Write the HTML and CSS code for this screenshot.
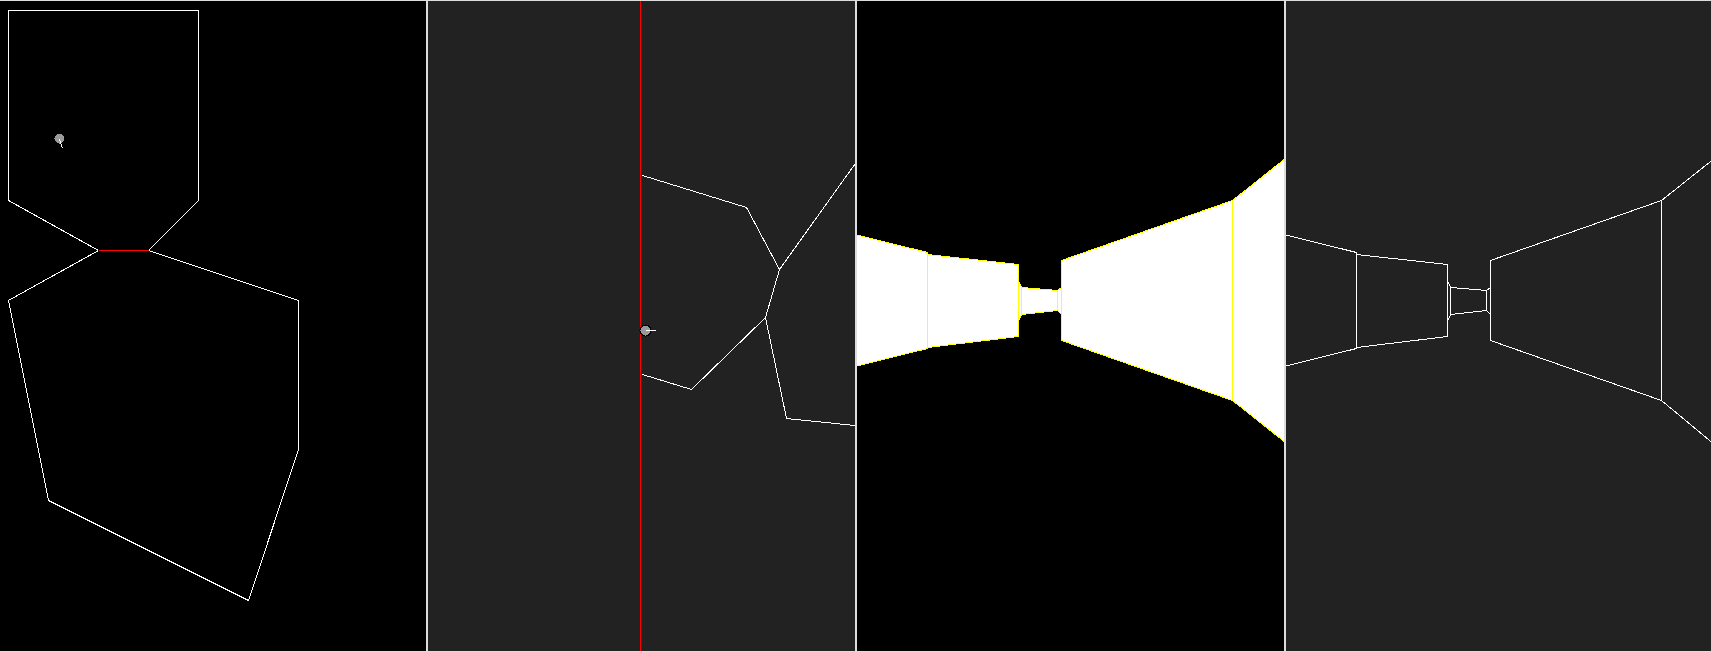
FILE: index.html
```html
<!DOCTYPE html>
<html lang="en">
<head>
<meta charset="utf-8">
<title>Portal renderer</title>
<link rel="stylesheet" href="styles.css">
</head>
<body>
<main class="stage">
  <svg class="view view-dark" width="426" height="650" viewBox="0 0 426 650">
    <polyline class="wall" points="98.5,249.5 8.5,199.5 8.5,9.5 198.5,9.5 198.5,199.5 148.5,249.5"/>
    <polyline class="wall" points="98.5,249.5 8.5,299.5 48.5,499.5 248.5,599.5 298.5,448.5 298.5,299.5 148.5,249.5"/>
    <line class="portal" x1="98.5" y1="249.5" x2="148.5" y2="249.5"/>
    <circle class="player" cx="59.5" cy="137.5" r="5.5"/>
    <line class="wall" x1="59.5" y1="138.5" x2="62.5" y2="147.5"/>
  </svg>
  <svg class="view view-grey" width="427" height="650" viewBox="0 0 427 650">
    <line class="portal" x1="212.5" y1="0" x2="212.5" y2="650"/>
    <polyline class="wall" points="214.5,174.5 318.5,206.5 351.5,268.5 427,163"/>
    <polyline class="wall" points="351.5,268.5 337.5,316.5 263.5,388.5 214.5,373.5"/>
    <polyline class="wall" points="337.5,316.5 358.5,417.5 427,424.5"/>
    <circle class="player" cx="217.5" cy="329.5" r="5.5"/>
    <line class="wall" x1="217.5" y1="329.5" x2="227.5" y2="329.5"/>
  </svg>
  <svg class="view view-dark" width="427" height="650" viewBox="0 0 427 650">
    <g class="solid">
      <polygon points="-2,233.5 70.5,251.5 70.5,347.5 -2,365.5"/>
      <polygon points="70.5,253.5 161.5,263.5 161.5,335.5 70.5,346.5"/>
      <polygon points="161.5,279.5 164.5,286.5 164.5,313.5 161.5,320.5"/>
      <polygon points="164.5,286.5 200.5,289.5 200.5,309.5 164.5,313.5"/>
      <polygon points="200.5,289.5 204.5,286.5 204.5,313.5 200.5,309.5"/>
      <polygon points="204.5,259.5 375.5,199.5 375.5,399.5 204.5,339.5"/>
      <polygon points="375.5,199.5 429,157 429,442 375.5,399.5"/>
    </g>
  </svg>
  <svg class="view view-grey" width="425" height="650" viewBox="0 0 425 650">
    <g class="outline">
      <polygon points="-2,233.5 70.5,251.5 70.5,347.5 -2,365.5"/>
      <polygon points="70.5,253.5 161.5,263.5 161.5,335.5 70.5,346.5"/>
      <polygon points="161.5,279.5 164.5,286.5 164.5,313.5 161.5,320.5"/>
      <polygon points="164.5,286.5 200.5,289.5 200.5,309.5 164.5,313.5"/>
      <polygon points="200.5,289.5 204.5,286.5 204.5,313.5 200.5,309.5"/>
      <polygon points="204.5,259.5 375.5,199.5 375.5,399.5 204.5,339.5"/>
      <polygon points="375.5,199.5 429,157 429,444 375.5,399.5"/>
    </g>
  </svg>
</main>
</body>
</html>
```
FILE: styles.css
```css
html, body {
  margin: 0;
  padding: 0;
  height: 100%;
  overflow: hidden;
  background: #ddd;
}

.stage {
  display: grid;
  grid-template-columns: 426px 427px 427px 425px;
  column-gap: 2px;
  padding: 1px 0;
  width: 1711px;
  height: 652px;
  box-sizing: border-box;
}

.view {
  display: block;
  overflow: hidden;
  shape-rendering: crispEdges;
}

.view-dark { background: #000; }
.view-grey { background: #222; }

.wall {
  fill: none;
  stroke: #fff;
  stroke-width: 1;
}

.portal {
  stroke: #f00;
  stroke-width: 1;
}

.player {
  fill: #999;
  stroke: #000;
  stroke-width: 1;
}

.solid polygon {
  fill: #fff;
  stroke: #ff0;
  stroke-width: 1;
}

.outline polygon {
  fill: none;
  stroke: #fff;
  stroke-width: 1;
}
```
